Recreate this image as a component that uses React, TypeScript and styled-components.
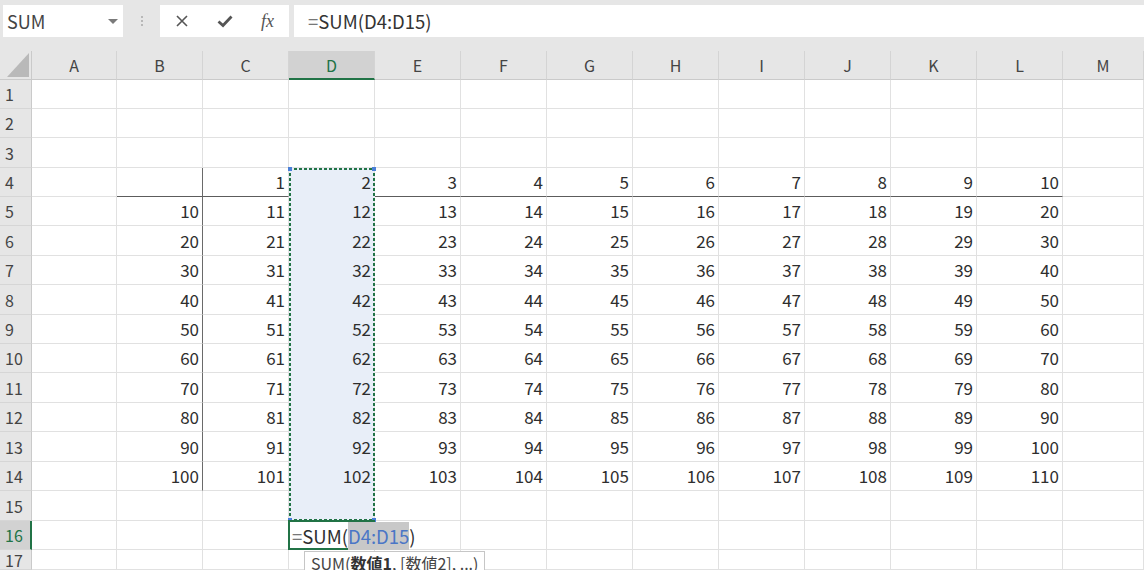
import React from "react";
import styled, { createGlobalStyle, css } from "styled-components";

const GlobalStyle = createGlobalStyle`
  html, body {
    margin: 0;
    padding: 0;
    background: #fff;
    overflow: hidden;
  }
  body {
    font-family: "Noto Sans CJK JP", "Noto Sans", sans-serif;
  }
`;

const COLS = ["A", "B", "C", "D", "E", "F", "G", "H", "I", "J", "K", "L", "M"];
const ROW_HEIGHTS = [29, 29, 30, 29, 29, 30, 29, 30, 29, 29, 30, 29, 30, 29, 30, 29, 20];
const ACTIVE_COL = 3;
const ACTIVE_ROW = 16;
const GREEN = "#217346";

const valueAt = (r: number, c: number) => {
  if (r === 4 && c >= 2 && c <= 11) return String(c - 1);
  if (r >= 5 && r <= 14 && c >= 1 && c <= 11) return String((r - 4) * 10 + (c - 1));
  return "";
};

const Window = styled.div`
  width: 1144px;
  height: 570px;
  display: flex;
  flex-direction: column;
  overflow: hidden;
  background: #e6e6e6;
`;

const Toolbar = styled.div`
  height: 51px;
  flex: none;
  display: flex;
  align-items: flex-start;
  padding: 5px 0 0 3px;
  box-sizing: border-box;
`;

const NameBox = styled.div`
  width: 120px;
  height: 32px;
  background: #fff;
  display: flex;
  align-items: center;
  justify-content: space-between;
  padding: 0 5px 0 4px;
  box-sizing: border-box;
  font-size: 18px;
  color: #444;
`;

const Caret = styled.span`
  width: 0;
  height: 0;
  border-left: 5px solid transparent;
  border-right: 5px solid transparent;
  border-top: 5px solid #7a7a7a;
`;

const Grip = styled.div`
  width: 37px;
  height: 32px;
  display: flex;
  flex-direction: column;
  align-items: center;
  justify-content: center;
  gap: 2px;

  & span {
    width: 2px;
    height: 2px;
    background: #b8b8b8;
  }
`;

const FxBox = styled.div`
  width: 129px;
  height: 32px;
  margin-right: 5px;
  background: #fff;
  display: grid;
  grid-template-columns: repeat(3, 43px);
  align-items: center;
  justify-items: center;
  color: #555;
`;

const FxLabel = styled.span`
  font-family: "Liberation Serif", serif;
  font-style: italic;
  font-size: 18px;
  color: #555;
`;

const FormulaBox = styled.div`
  flex: 1;
  height: 32px;
  background: #fff;
  display: flex;
  align-items: center;
  padding-left: 14px;
  font-size: 18.5px;
  color: #333;
  white-space: nowrap;
`;

const Equals = styled.span`
  color: #777;
`;

const Sheet = styled.div`
  flex: 1;
  display: grid;
  grid-template-columns: 32px 85px repeat(11, 86px) 1fr;
  grid-template-rows: 29px ${ROW_HEIGHTS.map((h) => `${h}px`).join(" ")};
  background: #fff;
`;

type Pos = { $r: number; $c: number };

// row 0 = column headers, col 0 = row headers
const place = (p: Pos) => css`
  grid-row: ${p.$r + 1};
  grid-column: ${p.$c + 1};
`;

const Corner = styled.div`
  grid-row: 1;
  grid-column: 1;
  background: #e6e6e6;
  border-right: 1px solid #cacaca;
  border-bottom: 1px solid #cacaca;
  box-sizing: border-box;
  display: flex;
  align-items: flex-end;
  justify-content: flex-end;
  padding: 0 2px 2px 0;

  &::before {
    content: "";
    width: 22px;
    height: 24px;
    background: #b9b9b9;
    clip-path: polygon(100% 0, 100% 100%, 0 100%);
  }
`;

const ColHeader = styled.div<Pos & { $on?: boolean }>`
  ${place}
  background: ${(p) => (p.$on ? "#d2d2d2" : "#e6e6e6")};
  border-right: 1px solid #d4d4d4;
  border-bottom: ${(p) => (p.$on ? `2px solid ${GREEN}` : "1px solid #cacaca")};
  box-sizing: border-box;
  display: flex;
  align-items: center;
  justify-content: center;
  font-size: 16px;
  color: ${(p) => (p.$on ? GREEN : "#444")};
`;

const RowHeader = styled.div<Pos & { $on?: boolean }>`
  ${place}
  background: ${(p) => (p.$on ? "#d2d2d2" : "#e6e6e6")};
  border-right: ${(p) => (p.$on ? `2px solid ${GREEN}` : "1px solid #cacaca")};
  border-bottom: 1px solid #d6d6d6;
  box-sizing: border-box;
  display: flex;
  align-items: center;
  padding-left: 5px;
  font-size: 16px;
  color: ${(p) => (p.$on ? GREEN : "#444")};
`;

const Cell = styled.div<Pos & { $lineBelow?: boolean; $lineRight?: boolean; $picked?: boolean }>`
  ${place}
  border-right: 1px solid ${(p) => (p.$lineRight ? "#6a6a6a" : "#e1e1e1")};
  border-bottom: 1px solid ${(p) => (p.$lineBelow ? "#5c5c5c" : "#e1e1e1")};
  box-sizing: border-box;
  display: flex;
  align-items: center;
  justify-content: flex-end;
  padding: 0 3px 1px 0;
  font-size: 17px;
  color: #2e2e2e;
  white-space: nowrap;

  ${(p) =>
    p.$picked &&
    css`
      background: #e8eef8;
      border-bottom-color: #e8eef8;
    `}
`;

const ActiveCell = styled.div<Pos>`
  ${place}
  position: relative;
  z-index: 3;
  display: flex;
  align-items: center;
  padding-left: 3px;
  font-size: 18.5px;
  color: #2e2e2e;
  white-space: nowrap;

  &::after {
    content: "";
    position: absolute;
    inset: -1px 0 0 -1px;
    border: 2px solid ${GREEN};
    pointer-events: none;
  }
`;

const Entry = styled.span`
  position: relative;
  z-index: 1;
`;

const RefText = styled.span`
  display: inline-block;
  line-height: 28px;
  background: #c8c8c8;
  color: #4a76c6;
`;

const Tooltip = styled.div`
  position: absolute;
  left: 15px;
  top: 30px;
  z-index: 4;
  background: #fff;
  border: 1px solid #c6c6c6;
  padding: 1px 6px 0 6px;
  font-size: 16px;
  line-height: 20px;
  color: #444;
  white-space: nowrap;

  & b {
    font-weight: 700;
    color: #333;
  }
`;

const dash = (dir: string) =>
  `repeating-linear-gradient(${dir}, ${GREEN} 0 3px, transparent 3px 5px)`;

const RangeMarquee = styled.div`
  grid-column: ${ACTIVE_COL + 2};
  grid-row: 5 / 17;
  position: relative;
  z-index: 2;
  pointer-events: none;
  background:
    ${dash("to right")} top left / 100% 2px no-repeat,
    ${dash("to right")} bottom left / 100% 2px no-repeat,
    ${dash("to bottom")} top left / 2px 100% no-repeat,
    ${dash("to bottom")} top right / 2px 100% no-repeat;
`;

const Handle = styled.span<{ $top?: boolean; $left?: boolean }>`
  position: absolute;
  width: 4px;
  height: 4px;
  background: #4a7fd8;
  ${(p) => (p.$top ? "top: -1px;" : "bottom: -1px;")}
  ${(p) => (p.$left ? "left: -1px;" : "right: -1px;")}
`;

const CrossIcon = () => (
  <svg width="14" height="14" viewBox="0 0 14 14">
    <path d="M2 2 L12 12 M12 2 L2 12" stroke="#555" strokeWidth="1.6" fill="none" />
  </svg>
);

const CheckIcon = () => (
  <svg width="16" height="14" viewBox="0 0 16 14">
    <path d="M1.5 7.5 L6 11.5 L14.5 2.5" stroke="#555" strokeWidth="2.8" fill="none" />
  </svg>
);

export default function App() {
  const rows = ROW_HEIGHTS.map((_, i) => i + 1);

  return (
    <>
      <GlobalStyle />
      <Window>
        <Toolbar>
          <NameBox>
            SUM
            <Caret />
          </NameBox>
          <Grip>
            <span />
            <span />
            <span />
          </Grip>
          <FxBox>
            <CrossIcon />
            <CheckIcon />
            <FxLabel>fx</FxLabel>
          </FxBox>
          <FormulaBox>
            <Equals>=</Equals>SUM(D4:D15)
          </FormulaBox>
        </Toolbar>

        <Sheet>
          <Corner />
          {COLS.map((c, i) => (
            <ColHeader key={c} $r={0} $c={i + 1} $on={i === ACTIVE_COL}>
              {c}
            </ColHeader>
          ))}

          {rows.map((r) => (
            <React.Fragment key={r}>
              <RowHeader $r={r} $c={0} $on={r === ACTIVE_ROW}>
                {r}
              </RowHeader>
              {COLS.map((c, ci) =>
                r === ACTIVE_ROW && ci === ACTIVE_COL ? (
                  <ActiveCell key={c} $r={r} $c={ci + 1}>
                    <Entry>
                      <Equals>=</Equals>SUM(<RefText>D4:D15</RefText>)
                    </Entry>
                    <Tooltip>
                      SUM(<b>数値1</b>, [数値2], ...)
                    </Tooltip>
                  </ActiveCell>
                ) : (
                  <Cell
                    key={c}
                    $r={r}
                    $c={ci + 1}
                    $lineBelow={r === 4 && ci >= 1 && ci <= 11}
                    $lineRight={ci === 1 && r >= 4 && r <= 14}
                    $picked={ci === ACTIVE_COL && r >= 4 && r <= 15}
                  >
                    {valueAt(r, ci)}
                  </Cell>
                )
              )}
            </React.Fragment>
          ))}

          <RangeMarquee>
            <Handle $top $left />
            <Handle $top />
            <Handle $left />
            <Handle />
          </RangeMarquee>
        </Sheet>
      </Window>
    </>
  );
}
